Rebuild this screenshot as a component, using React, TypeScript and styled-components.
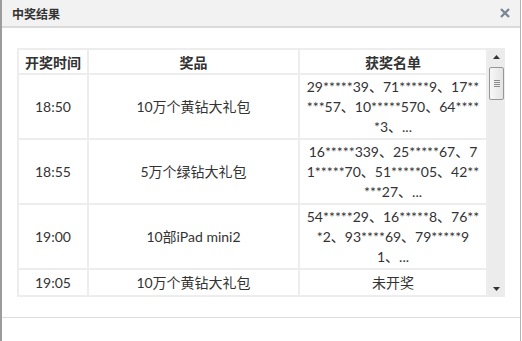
import React from "react";
import styled, { createGlobalStyle } from "styled-components";

const Global = createGlobalStyle`
  html, body { margin: 0; padding: 0; background: #fff; }
  body { font-family: Lato, "Noto Sans CJK SC", sans-serif; }
`;

const Window = styled.div`
  width: 518px;
  height: 341px;
  border-left: 2px solid #9c9c9c;
  border-right: 1px solid #b4b4b4;
  background: #fff;
  display: flex;
  flex-direction: column;
  box-sizing: content-box;
`;

const TitleBar = styled.div`
  height: 26px;
  background: #f2f2f2;
  border-bottom: 2px solid #dadada;
  display: flex;
  align-items: center;
  justify-content: space-between;
  padding: 0 9px 0 10px;
`;

const Title = styled.span`
  font-family: "Noto Sans CJK SC", sans-serif;
  font-size: 12px;
  font-weight: bold;
  color: #333;
`;

const Close = styled.span`
  display: flex;
  width: 12px;
  height: 12px;
`;

const Content = styled.div`
  height: 290px;
  border-bottom: 1px solid #dcdcdc;
  padding: 20px 0 0 15px;
  box-sizing: border-box;
  display: flex;
  align-items: flex-start;
`;

const Viewport = styled.div`
  width: 471px;
  height: 249px;
  overflow: hidden;
`;

const Table = styled.table`
  width: 471px;
  table-layout: fixed;
  border-collapse: separate;
  border-spacing: 2px;
  background: #ededed;
  font-family: Lato, "Noto Sans CJK SC", sans-serif;
  font-size: 14px;
  color: #333;
`;

const Th = styled.th<{ $w: number }>`
  width: ${(p) => p.$w}px;
  height: 23px;
  padding: 0;
  background: #fff;
  font-family: "Noto Sans CJK SC", sans-serif;
  font-weight: bold;
  font-size: 14px;
  line-height: 20px;
  text-align: center;
  vertical-align: middle;
`;

const Td = styled.td<{ $h: number }>`
  height: ${(p) => p.$h}px;
  padding: 0;
  background: #fff;
  text-align: center;
  vertical-align: middle;
  line-height: 20px;
`;

const Line = styled.span`
  display: block;
  white-space: nowrap;
`;

const Scrollbar = styled.div`
  width: 17px;
  height: 249px;
  background: #ececec;
  display: flex;
  flex-direction: column;
`;

const Arrow = styled.div`
  height: 17px;
  display: flex;
  align-items: center;
  justify-content: center;
`;

const Track = styled.div`
  flex: 1;
  padding: 2px 1px 0 1px;
`;

const Thumb = styled.div`
  height: 31px;
  border: 1px solid #979797;
  border-radius: 2px;
  background: linear-gradient(to right, #f7f7f7, #e4e4e4);
  display: flex;
  flex-direction: column;
  align-items: center;
  justify-content: center;
  gap: 1px;
`;

const Grip = styled.span`
  width: 6px;
  height: 1px;
  background: #8a8a8a;
`;

type Row = { time: string; prize: string; names: string[] };

const rows: Row[] = [
  {
    time: "18:50",
    prize: "10万个黄钻大礼包",
    names: ["29*****39、71*****9、17**", "***57、10*****570、64****", "*3、..."],
  },
  {
    time: "18:55",
    prize: "5万个绿钻大礼包",
    names: ["16*****339、25*****67、7", "1*****70、51*****05、42**", "***27、..."],
  },
  {
    time: "19:00",
    prize: "10部iPad mini2",
    names: ["54*****29、16*****8、76**", "*2、93****69、79*****9", "1、..."],
  },
  { time: "19:05", prize: "10万个黄钻大礼包", names: ["未开奖"] },
  { time: "19:10", prize: "5万个绿钻大礼包", names: ["未开奖"] },
];

const Tri = ({ up }: { up: boolean }) => (
  <svg width="7" height="4" viewBox="0 0 7 4">
    <path d={up ? "M0 4 L3.5 0 L7 4 Z" : "M0 0 L7 0 L3.5 4 Z"} fill="#333" />
  </svg>
);

export default function App() {
  return (
    <>
      <Global />
      <Window>
        <TitleBar>
          <Title>中奖结果</Title>
          <Close>
            <svg width="12" height="12" viewBox="0 0 12 12">
              <path d="M2 2 L10 10 M10 2 L2 10" stroke="#7b8796" strokeWidth="2.4" />
            </svg>
          </Close>
        </TitleBar>
        <Content>
          <Viewport>
            <Table>
              <thead>
                <tr>
                  <Th $w={68}>开奖时间</Th>
                  <Th $w={209}>奖品</Th>
                  <Th $w={186}>获奖名单</Th>
                </tr>
              </thead>
              <tbody>
                {rows.map((r) => {
                  const h = r.names.length > 1 ? 63 : 25;
                  return (
                    <tr key={r.time}>
                      <Td $h={h}>{r.time}</Td>
                      <Td $h={h}>{r.prize}</Td>
                      <Td $h={h}>
                        {r.names.map((n, i) => (
                          <Line key={i}>{n}</Line>
                        ))}
                      </Td>
                    </tr>
                  );
                })}
              </tbody>
            </Table>
          </Viewport>
          <Scrollbar>
            <Arrow>
              <Tri up />
            </Arrow>
            <Track>
              <Thumb>
                <Grip />
                <Grip />
                <Grip />
                <Grip />
              </Thumb>
            </Track>
            <Arrow>
              <Tri up={false} />
            </Arrow>
          </Scrollbar>
        </Content>
      </Window>
    </>
  );
}
